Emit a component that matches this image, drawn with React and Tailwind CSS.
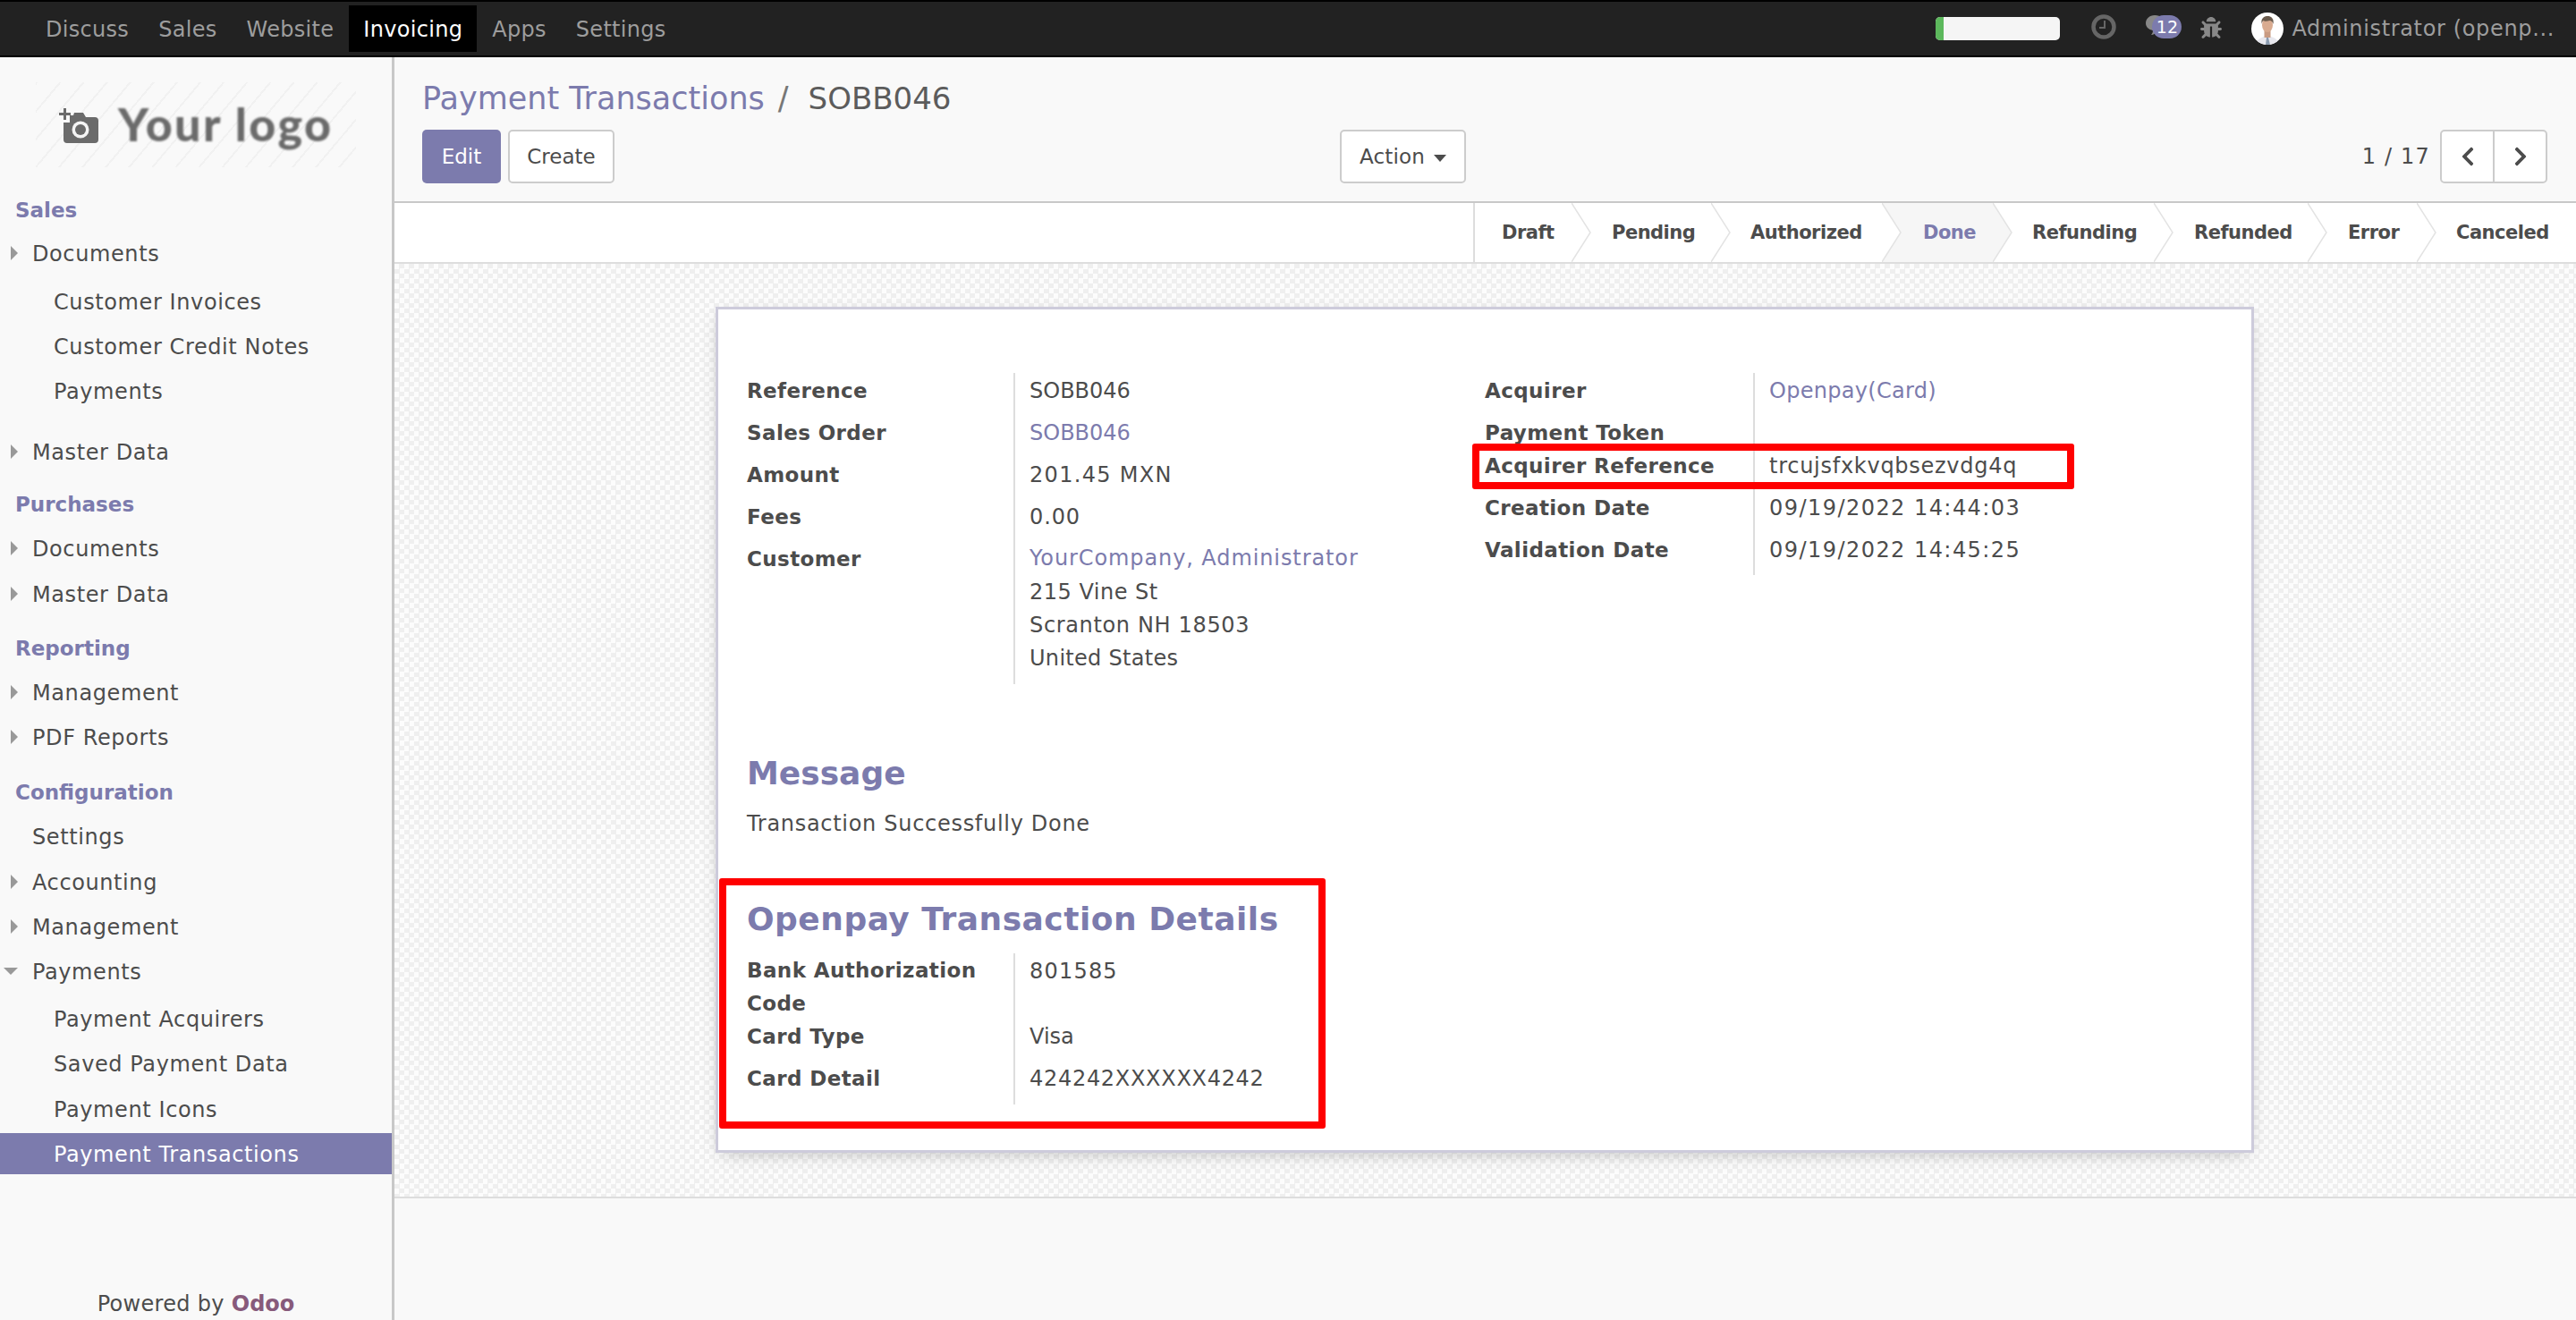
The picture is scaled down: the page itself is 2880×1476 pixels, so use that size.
import { FaBug, FaChevronLeft, FaChevronRight } from "react-icons/fa";

const navItems = ["Discuss", "Sales", "Website", "Invoicing", "Apps", "Settings"];

// sidebar rows: type h = section title, c = closed caret, o = open caret, n = no caret, s = sub item
const sideRows = [
  { label: "Sales", type: "h", mt: "mt-0" },
  { label: "Documents", type: "c", mt: "mt-[2px]" },
  { label: "Customer Invoices", type: "s", mt: "mt-[8px]" },
  { label: "Customer Credit Notes", type: "s", mt: "mt-[4px]" },
  { label: "Payments", type: "s", mt: "mt-[4px]" },
  { label: "Master Data", type: "c", mt: "mt-[22px]" },
  { label: "Purchases", type: "h", mt: "mt-[13px]" },
  { label: "Documents", type: "c", mt: "mt-[3px]" },
  { label: "Master Data", type: "c", mt: "mt-[5px]" },
  { label: "Reporting", type: "h", mt: "mt-[15px]" },
  { label: "Management", type: "c", mt: "mt-[3px]" },
  { label: "PDF Reports", type: "c", mt: "mt-[4px]" },
  { label: "Configuration", type: "h", mt: "mt-[16px]" },
  { label: "Settings", type: "n", mt: "mt-[3px]" },
  { label: "Accounting", type: "c", mt: "mt-[5px]" },
  { label: "Management", type: "c", mt: "mt-[4px]" },
  { label: "Payments", type: "o", mt: "mt-[4px]" },
  { label: "Payment Acquirers", type: "s", mt: "mt-[7px]" },
  { label: "Saved Payment Data", type: "s", mt: "mt-[4px]" },
  { label: "Payment Icons", type: "s", mt: "mt-[5px]" },
  { label: "Payment Transactions", type: "a", mt: "mt-[4px]" },
];

const steps = [
  { label: "Draft", cls: "w-[108px] pl-[30px]" },
  { label: "Pending", cls: "w-[156px] pl-[45px]" },
  { label: "Authorized", cls: "w-[191px] pl-[44px]" },
  { label: "Done", cls: "w-[124px] pl-[46px]", active: true },
  { label: "Refunding", cls: "w-[180px] pl-[44px]" },
  { label: "Refunded", cls: "w-[172px] pl-[45px]" },
  { label: "Error", cls: "w-[122px] pl-[45px]" },
  { label: "Canceled", cls: "w-[178px] pl-[44px]", last: true },
];

function SideRow({ row }) {
  if (row.type === "h") {
    return (
      <div className={`${row.mt} h-[46px] pl-[17px] flex items-center text-[23px] font-bold text-[#7c7bad]`}>
        {row.label}
      </div>
    );
  }
  if (row.type === "s" || row.type === "a") {
    const active = row.type === "a";
    return (
      <div
        className={`${row.mt} h-[46px] pl-[60px] pt-[2px] flex items-center tracking-[0.6px] ${
          active ? "bg-[#7c7bad] text-white" : ""
        }`}
      >
        {row.label}
      </div>
    );
  }
  return (
    <div className={`${row.mt} h-[46px] pl-[36px] pt-[2px] flex items-center tracking-[0.6px] relative`}>
      {row.type === "c" && (
        <span className="absolute left-[12px] top-[15px] border-y-[8px] border-l-[8px] border-y-transparent border-l-[#999999]" />
      )}
      {row.type === "o" && (
        <span className="absolute left-[4px] top-[19px] border-x-[8px] border-t-[8px] border-x-transparent border-t-[#999999]" />
      )}
      {row.label}
    </div>
  );
}

function Field({ label, labelW, rowH, children }) {
  return (
    <div className={`flex ${rowH}`}>
      <div className={`${labelW} pt-[1px] font-bold text-[23px] leading-[38px] tracking-[0.4px]`}>{label}</div>
      <div className="h-full pt-[1px] flex-1 border-l-2 border-[#dddddd] pl-[16px] leading-[38px]">{children}</div>
    </div>
  );
}

function Avatar() {
  return (
    <svg width="36" height="36" viewBox="0 0 36 36" className="shrink-0">
      <defs>
        <clipPath id="av">
          <circle cx="18" cy="18" r="18" />
        </clipPath>
      </defs>
      <g clipPath="url(#av)">
        <rect width="36" height="36" fill="#ffffff" />
        <path d="M5 36c1-6 6-8 9-9h8c3 1 8 3 9 9z" fill="#e8e8ee" />
        <path d="M17 28h2l2 8h-5z" fill="#8a9bb0" />
        <rect x="14.5" y="20" width="7" height="8" fill="#c99b82" />
        <ellipse cx="18" cy="14" rx="6" ry="8" fill="#d9ab90" />
        <path d="M11.5 13c-1-7 3-9 7-9s7 3 6 9c-1-3-2-4-4-4-3 1-6 1-7 0-1 1-2 2-2 4z" fill="#6a5a4c" />
      </g>
    </svg>
  );
}

export default function App() {
  return (
    <div className="h-[1476px] overflow-hidden flex flex-col font-['DejaVu_Sans',sans-serif] text-[24px] text-[#4c4c4c] bg-[#f9f9f9]">
      {/* Top bar */}
      <div className="h-[64px] shrink-0 bg-[#222222] border-y-2 border-black flex items-center pl-[35px] pr-[24px] text-[#9d9d9d]">
        <div className="flex gap-[1px]">
          {navItems.map((item) => (
            <div
              key={item}
              className={`h-[52px] px-[16px] pt-[1px] flex items-center tracking-[0.3px] ${
                item === "Invoicing" ? "bg-black text-white" : ""
              }`}
            >
              {item}
            </div>
          ))}
        </div>
        <div className="ml-auto flex items-center">
          <div className="w-[139px] h-[26px] rounded-[5px] bg-[#f5f5f5] overflow-hidden">
            <div className="w-[9px] h-full bg-[#5cb85c]" />
          </div>
          <svg width="28" height="28" viewBox="0 0 28 28" className="ml-[35px] -mt-[4px]">
            <circle cx="14" cy="14" r="11.5" fill="none" stroke="#666666" strokeWidth="4.5" />
            <path d="M15 7v8H9" fill="none" stroke="#666666" strokeWidth="2" />
          </svg>
          <div className="relative ml-[29px] w-[56px] h-[30px] -mt-[4px]">
            <svg width="30" height="30" viewBox="0 0 30 30" className="absolute left-[2px] top-0">
              <path d="M12 2c7 0 11 4 11 9s-4 9-9 9c-1 2-3 4-6 4 1-1 2-3 2-5-5-1-8-4-8-8 0-5 4-9 10-9z" fill="#888888" />
            </svg>
            <span className="absolute left-[11px] top-[2px] w-[33px] h-[26px] rounded-full bg-[#7c7bad] text-white text-[19px] font-medium flex items-center justify-center">
              12
            </span>
          </div>
          <FaBug className="ml-[9px] text-[#888888] -mt-[2px] w-[24px] h-[24px]" />
          <div className="ml-[33px]">
            <Avatar />
          </div>
          <span className="ml-[9px] tracking-[0.65px] whitespace-nowrap">Administrator (openp...</span>
        </div>
      </div>

      <div className="flex flex-1 min-h-0">
        {/* Sidebar */}
        <div className="w-[441px] shrink-0 border-r-[3px] border-[#c8c8c8] flex flex-col">
          <div className="mt-[28px] mb-[25px] ml-[40px] w-[358px] h-[95px] bg-[repeating-linear-gradient(130deg,#f1f1f1_0,#f1f1f1_2px,transparent_2px,transparent_20px)] flex items-center pl-[25px]">
            <svg width="46" height="42" viewBox="0 0 46 42" className="blur-[0.6px]">
              <path d="M6 2v5H1v3h5v5h3v-5h5V7H9V2z" fill="#6b6b6b" />
              <path
                d="M18 7h10l3 5h10a4 4 0 0 1 4 4v21a4 4 0 0 1-4 4H10a4 4 0 0 1-4-4V18h7v-8h4z"
                fill="#6b6b6b"
              />
              <circle cx="25" cy="26" r="9.5" fill="#f4f4f4" />
              <circle cx="25" cy="26" r="6" fill="#6b6b6b" />
            </svg>
            <span className="ml-[21px] font-['Lato',sans-serif] font-black text-[52px] leading-none tracking-[2.4px] whitespace-nowrap text-[#6b6b6b] blur-[1px] -mt-[3px]">
              Your logo
            </span>
          </div>
          {sideRows.map((row, i) => (
            <SideRow key={i} row={row} />
          ))}
          <div className="mt-auto h-[38px] pt-[2px] flex items-center justify-center tracking-[0.3px]">
            Powered by&nbsp;<span className="font-bold text-[#875a7b] tracking-normal">Odoo</span>
          </div>
        </div>

        {/* Main */}
        <div className="flex-1 min-w-0 flex flex-col">
          {/* Control panel */}
          <div className="h-[163px] shrink-0 border-b-2 border-[#c8c8c8] pt-[24px] pl-[31px] pr-[32px]">
            <div className="h-[44px] leading-[44px] text-[35px] whitespace-nowrap">
              <span className="text-[#7c7bad]">Payment Transactions</span>
              <span className="ml-[15px] mr-[22px] text-[#777777]">/</span>
              <span className="text-[#5c5c5c] text-[34px]">SOBB046</span>
            </div>
            <div className="mt-[13px] flex items-center">
              <div className="w-[1026px] flex gap-[8px]">
                <div className="w-[88px] h-[60px] rounded-[5px] bg-[#7c7bad] text-white text-[23px] flex items-center justify-center">
                  Edit
                </div>
                <div className="w-[119px] h-[60px] rounded-[5px] border-2 border-[#cccccc] bg-white text-[23px] flex items-center justify-center">
                  Create
                </div>
              </div>
              <div className="w-[141px] h-[60px] rounded-[5px] border-2 border-[#cccccc] bg-white text-[23px] tracking-[0.2px] flex items-center justify-center gap-[10px]">
                Action
                <span className="mt-[3px] border-x-[7px] border-t-[8px] border-x-transparent border-t-[#4c4c4c]" />
              </div>
              <div className="ml-auto flex items-center">
                <span className="mr-[11px] tracking-[1.2px]">1 / 17</span>
                <div className="w-[120px] h-[60px] rounded-[5px] border-2 border-[#cccccc] bg-white flex">
                  <div className="flex-1 border-r-2 border-[#cccccc] flex items-center justify-center">
                    <FaChevronLeft className="w-[22px] h-[24px]" />
                  </div>
                  <div className="flex-1 flex items-center justify-center">
                    <FaChevronRight className="w-[22px] h-[24px]" />
                  </div>
                </div>
              </div>
            </div>
          </div>

          {/* Status bar */}
          <div className="h-[68px] shrink-0 bg-white border-b-2 border-[#dddddd] flex justify-end text-[21px] font-bold tracking-[-0.5px]">
            <div className="flex border-l-2 border-[#dddddd]">
              {steps.map((step) => (
                <div
                  key={step.label}
                  className={`relative h-[66px] pt-[2px] ${step.cls} flex items-center ${step.active ? "text-[#7c7bad]" : ""}`}
                >
                  {step.active && (
                    <svg width="145" height="66" viewBox="0 0 145 66" className="absolute left-0 top-0">
                      <polygon points="0,0 124,0 145,33 124,66 0,66 21,33" fill="#f6f6f6" />
                    </svg>
                  )}
                  <span className="relative">{step.label}</span>
                  {!step.last && (
                    <svg width="22" height="66" viewBox="0 0 22 66" className="absolute left-full top-0 z-10">
                      <path d="M0 0l21 33L0 66" fill="none" stroke="#e3e3e3" strokeWidth="1.5" />
                    </svg>
                  )}
                </div>
              ))}
            </div>
          </div>

          {/* Sheet */}
          <div className="shrink-0 h-[1045px] border-b-2 border-[#dddddd] pt-[48px] bg-[conic-gradient(#efefef_25%,#fcfcfc_0_50%,#efefef_0_75%,#fcfcfc_0)] bg-[length:11px_11px]">
            <div className="relative ml-[359px] w-[1720px] h-[946px] bg-white border-[3px] border-[#cdcbdb] shadow-[0_6px_20px_-8px_rgba(0,0,0,0.3)] pt-[71px] pl-[32px]">
              <div className="flex">
                <div className="w-[825px]">
                  <Field label="Reference" labelW="w-[298px]" rowH="h-[47px]">SOBB046</Field>
                  <Field label="Sales Order" labelW="w-[298px]" rowH="h-[47px]">
                    <span className="text-[#7c7bad]">SOBB046</span>
                  </Field>
                  <Field label="Amount" labelW="w-[298px]" rowH="h-[47px]">
                    <span className="tracking-[1.3px]">201.45 MXN</span>
                  </Field>
                  <Field label="Fees" labelW="w-[298px]" rowH="h-[47px]">
                    <span className="tracking-[0.9px]">0.00</span>
                  </Field>
                  <Field label="Customer" labelW="w-[298px]" rowH="h-[160px]">
                    <div className="leading-[37px]">
                      <div className="text-[#7c7bad] tracking-[0.9px] mb-[1px]">YourCompany, Administrator</div>
                      <div className="tracking-[0.5px]">215 Vine St</div>
                      <div className="tracking-[0.65px]">Scranton NH 18503</div>
                      <div className="tracking-[0.3px]">United States</div>
                    </div>
                  </Field>
                </div>
                <div className="flex-1">
                  <Field label="Acquirer" labelW="w-[300px]" rowH="h-[47px]">
                    <span className="text-[#7c7bad] tracking-[0.3px]">Openpay(Card)</span>
                  </Field>
                  <Field label="Payment Token" labelW="w-[300px]" rowH="h-[37px]" />
                  <Field label="Acquirer Reference" labelW="w-[300px]" rowH="h-[47px]">
                    <span className="tracking-[0.73px]">trcujsfxkvqbsezvdg4q</span>
                  </Field>
                  <Field label="Creation Date" labelW="w-[300px]" rowH="h-[47px]">
                    <span className="tracking-[1.45px]">09/19/2022 14:44:03</span>
                  </Field>
                  <Field label="Validation Date" labelW="w-[300px]" rowH="h-[48px]">
                    <span className="tracking-[1.45px]">09/19/2022 14:45:25</span>
                  </Field>
                </div>
              </div>

              <h2 className="mt-[78px] text-[36px] leading-[44px] font-bold text-[#7c7bad]">Message</h2>
              <div className="mt-[15px] leading-[38px] tracking-[0.7px]">Transaction Successfully Done</div>

              <h2 className="mt-[65px] text-[36px] leading-[46px] font-bold text-[#7c7bad] tracking-[0.5px]">
                Openpay Transaction Details
              </h2>
              <div className="mt-[15px] w-[825px]">
                <Field label={<span className="block leading-[37px]">Bank Authorization Code</span>} labelW="w-[298px]" rowH="h-[73px]">
                  <span className="tracking-[1.2px]">801585</span>
                </Field>
                <Field label="Card Type" labelW="w-[298px]" rowH="h-[47px]">Visa</Field>
                <Field label="Card Detail" labelW="w-[298px]" rowH="h-[49px]">
                  <span className="tracking-[0.7px]">424242XXXXXX4242</span>
                </Field>
              </div>

              {/* red annotation boxes */}
              <div className="absolute left-[843px] top-[150px] w-[673px] h-[51px] border-[8px] border-[#ff0000] rounded-[3px]" />
              <div className="absolute left-[1px] top-[636px] w-[678px] h-[280px] border-[8px] border-[#ff0000] rounded-[3px]" />
            </div>
          </div>
        </div>
      </div>
    </div>
  );
}
